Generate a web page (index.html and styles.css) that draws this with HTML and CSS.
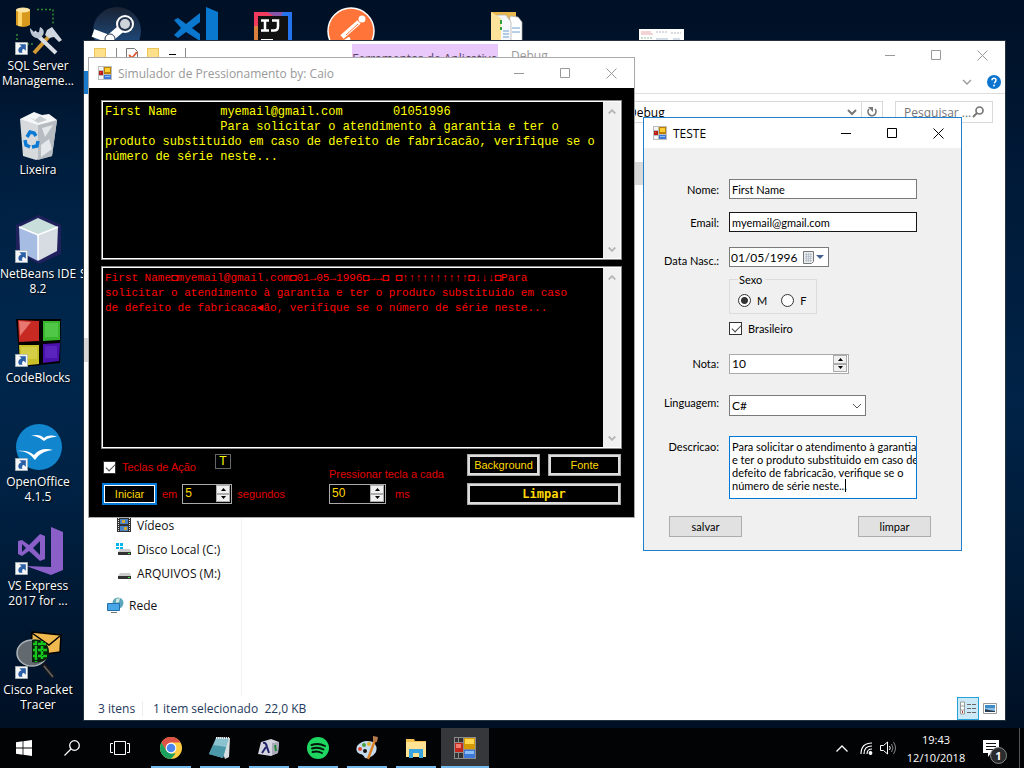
FILE: index.html
```html
<!DOCTYPE html>
<html lang="pt-BR">
<head>
<meta charset="utf-8">
<title>Simulador de Pressionamento</title>
<link rel="stylesheet" href="styles.css">
</head>
<body>
<svg class="defs" aria-hidden="true">
  <symbol id="form-icon" viewBox="0 0 14 14">
    <path fill="#bdbdbd" d="M0 0h14v14H0z"/><path fill="#f5f5f5" d="M1 1h4v3H1zM1 10h4v3H1z"/>
    <path fill="#b81d13" d="M1 5h4v4H1z"/><path fill="#e8594c" d="M2 6h1v1H2z"/>
    <path fill="#b98300" d="M6 1h7v7H6z"/><path fill="#ffce35" d="M7 2h5v4H7z"/>
    <path fill="#3d78d8" d="M6 9h7v4H6z"/><path fill="#8dbdf7" d="M7 10h5v1H7z"/>
  </symbol>
  <symbol id="form-icon-dark" viewBox="0 0 22 22">
    <path fill="#8c8c8c" d="M0 0h22v22H0z"/><path fill="#333" d="M1 1h3v4H1zM5 1h4v4H5zM1 16h3v5H1zM5 16h4v5H5z"/>
    <path fill="#c3261c" d="M1 6h8v9H1z"/><path fill="#ee7b70" d="M2 7h5v4H2z"/>
    <path fill="#d49a06" d="M10 1h11v11H10z"/><path fill="#ffd84d" d="M11 2h9v5h-9z"/>
    <path fill="#3d78d8" d="M10 13h11v8H10z"/><path fill="#8dbdf7" d="M11 14h9v3h-9z"/>
  </symbol>
  <symbol id="win-min" viewBox="0 0 11 11"><path d="M0 5.500h10" fill="none" stroke="currentColor"/></symbol>
  <symbol id="win-max" viewBox="0 0 11 11"><path d="M.5.5h9v9h-9z" fill="none" stroke="currentColor"/></symbol>
  <symbol id="win-close" viewBox="0 0 11 11"><path d="M.5.5l10 10M10.500.5l-10 10" fill="none" stroke="currentColor"/></symbol>
  <symbol id="shortcut" viewBox="0 0 12 12">
    <path fill="#f6f6f6" stroke="#9aa" stroke-width=".6" d="M.3.3h11.400v11.400H.3z"/>
    <path fill="#2b5fa6" d="M4 2h6v6L8 6.200C6.500 7 6 8.500 7 10H4C2 7.500 3.500 5 6 4z"/>
  </symbol>
  <symbol id="up" viewBox="0 0 8 5"><path d="M.7 4.500L4 1.200l3.300 3.300" fill="none" stroke="#b5b5b5" stroke-width="1.800"/></symbol>
  <symbol id="down" viewBox="0 0 8 5"><path d="M.7.5L4 3.800 7.300.5" fill="none" stroke="#b5b5b5" stroke-width="1.800"/></symbol>
  <symbol id="spin-up" viewBox="0 0 5 3"><path d="M0 3L2.500 0 5 3z"/></symbol>
  <symbol id="spin-down" viewBox="0 0 5 3"><path d="M0 0h5L2.500 3z"/></symbol>
  <symbol id="folder" viewBox="0 0 14 14"><path fill="#e9c657" d="M0 0h12v9h1v5H0z"/><path fill="#ffe08a" d="M1 1h10v12H1z"/></symbol>
</svg>

<main class="desktop">
  <div class="icons">
    <div class="shortcut c1 r1">
      <svg width="52" height="52" viewBox="0 0 52 52">
        <path fill="#d79a1d" d="M4 4q7-4 14 0v15q-7 4-14 0z"/><path fill="#ffd56a" d="M6 6h4v14H6z"/><ellipse cx="11" cy="4" rx="7" ry="2.500" fill="#fbe6a6"/>
        <path d="M25 3.500h16v14M5 28v10h18" fill="none" stroke="#2b8a34" stroke-width="1.500" stroke-dasharray="2 2"/>
        <path d="M22 47l18-20" stroke="#d39a35" stroke-width="4"/><path d="M22 26l22 21" stroke="#d9dee6" stroke-width="4"/>
        <path d="M18 22l5 5 4-1 1-5c5 2 5 8 0 11-6 1-10-3-10-10z" fill="#bcc6d3"/><path d="M35 24l5-3 10 13-3 2-5-5-5 1-4-3z" fill="#cfd6df"/>
        <use href="#shortcut" x="3" y="36" width="13" height="13"/>
      </svg>
      <span>SQL Server<br>Manageme...</span>
    </div>
    <div class="shortcut c1 r2">
      <svg width="52" height="52" viewBox="0 0 52 52">
        <path fill="#d6dadd" d="M8 9l37 1-5 36-16 4-13-4z"/><path fill="#b6bcc1" d="M26 15l19-5-5 36-14 4z"/><path fill="#f5f6f7" d="M8 9l8-4 6-3 8 3 7-1 8 6-19 5z"/>
        <path fill="#c7cccf" d="M17 7l6 3 5-4 7 4-9 3z"/><path fill="#e5e8ea" d="M30 18l11-3-8 12zM29 35l8-6 3 10-11 8z"/>
        <path d="M15 27l3-5 4 1 2 3M13 30l1 5 4 2M20 37l5-1 1-5" fill="none" stroke="#0b7ad5" stroke-width="3.500"/>
      </svg>
      <span>Lixeira</span>
    </div>
    <div class="shortcut c1 r3">
      <svg width="52" height="52" viewBox="0 0 52 52">
        <path fill="#20205c" d="M4 11L27 1l22 10v29L27 50 4 38z"/>
        <path fill="#c8dedb" d="M7 13l19-9 20 9-20 8z"/><path fill="#a6bce3" d="M7 13l19 8v26L8 38z"/><path fill="#d6dce2" d="M26 21l20-8-1 24-19 10z"/><path d="M7 13l19 8 20-8M26 21v25" fill="none" stroke="#fff" stroke-width="1.500"/>
        <use href="#shortcut" x="3" y="36" width="13" height="13"/>
      </svg>
      <span>NetBeans IDE<br>8.2</span>
    </div>
    <div class="shortcut c2 r3 cut"><span>S</span></div>
    <div class="shortcut c1 r4">
      <svg width="52" height="52" viewBox="0 0 52 52">
        <path d="M4 1h45l-1 44-40 4z"/>
        <path fill="#c62a22" d="M6 2l21 1v20L7 24z"/><path fill="#e77770" d="M7 3l12 1-11 14z"/><path fill="#38b62e" d="M31 3h17v19l-17 1z"/><path fill="#6ad860" d="M33 5h13v14H33z" opacity=".5"/>
        <path fill="#c9bf28" d="M7 27h20v19L8 48z"/><path fill="#e4dc66" d="M9 29h16v12H9z" opacity=".5"/><path fill="#4a12ad" d="M31 26l17-1-1 18-16 2z"/><path fill="#6a35cc" d="M33 28h12v12H33z" opacity=".5"/>
        <use href="#shortcut" x="3" y="36" width="13" height="13"/>
      </svg>
      <span>CodeBlocks</span>
    </div>
    <div class="shortcut c1 r5">
      <svg width="52" height="52" viewBox="0 0 52 52">
        <circle cx="27" cy="25" r="23" fill="#1186cf"/>
        <path fill="#fff" d="M19 14c6-2 10-1 13 2 4-3 8-3 13-1-6 0-9 1-13 4-4-3-7-5-13-5zM5 29c7-1 13 0 17 4 5-6 11-7 19-5-9 1-14 4-18 10-5-6-9-9-18-9z"/>
        <use href="#shortcut" x="3" y="36" width="13" height="13"/>
      </svg>
      <span>OpenOffice<br>4.1.5</span>
    </div>
    <div class="shortcut c1 r6">
      <svg width="52" height="52" viewBox="0 0 52 52">
        <path fill="#8a5fc8" d="M39 1l12 5v38l-12 5-25-9 25 1z"/><path fill="#8a5fc8" fill-rule="evenodd" d="M6 15l4-1 7 5 11-11 5 2v23l-5 2-11-10-7 5-4-2zM10 18v8l4-4zM28 15l-7 7 7 7z"/>
        <use href="#shortcut" x="3" y="36" width="13" height="13"/>
      </svg>
      <span>VS Express<br>2017 for ...</span>
    </div>
    <div class="shortcut c1 r7">
      <svg width="52" height="52" viewBox="0 0 52 52">
        <path fill="#efb94f" stroke="#000" stroke-width="1.500" d="M20 2l29 3-1 17-29 4z"/><path d="M20 3l17 12L48 6" fill="none" stroke="#000" stroke-width="1.500"/>
        <path d="M31 34l10 13" stroke="#15171a" stroke-width="5"/><path d="M32 36l9 11" stroke="#666" stroke-width="1.500"/>
        <ellipse cx="20" cy="23" rx="15" ry="13" fill="#626a70" stroke="#adb3b7" stroke-width="1.500"/>
        <path fill="#07210a" d="M20 10c10-2 17 4 17 12s-8 12-17 10z"/><path d="M21 14h13M21 20h15M21 26h14M24 11v21M30 11v18" stroke="#15c51d" stroke-width="2.500" stroke-dasharray="4 1"/>
        <use href="#shortcut" x="3" y="36" width="13" height="13"/>
      </svg>
      <span>Cisco Packet<br>Tracer</span>
    </div>
    <div class="shortcut c2 r1">
      <svg width="52" height="52" viewBox="0 0 52 52">
        <defs><linearGradient id="st" x2="0" y2="1"><stop stop-color="#1a2233"/><stop offset="1" stop-color="#1f5793"/></linearGradient></defs>
        <circle cx="27" cy="25" r="24" fill="url(#st)"/><path d="M3 27l16 6 14-12" fill="none" stroke="#fff" stroke-width="8"/><circle cx="35" cy="18" r="9" fill="#fff"/><circle cx="35" cy="18" r="7" fill="#26354f"/><circle cx="35" cy="18" r="5" fill="#cfd4db"/><circle cx="20" cy="33" r="5" fill="#fff" stroke="#26354f"/>
      </svg>
    </div>
    <div class="shortcut c3 r1">
      <svg width="52" height="52" viewBox="0 0 52 52">
        <path fill="#0a78cf" fill-rule="evenodd" d="M6 14l4-2 8 6L32 7v28L18 26l-8 6-4-3 7-7zM32 16l-8 6 8 6z"/><path fill="#0a78cf" d="M38 1l12 5v40l-12 4z"/>
      </svg>
    </div>
    <div class="shortcut c4 r1">
      <svg width="52" height="52" viewBox="0 0 52 52">
        <path fill="#f2395e" d="M8 6h38v38H8z"/><path fill="#2574ef" d="M46 6v38H27l4-30-2-8z"/><path fill="#d8803c" d="M8 20h8v24H8z"/><path fill="#8655a8" d="M21 6h16l-3 8z"/><path fill="#111" d="M12 10h30v30H12z"/>
        <path d="M15 14.500h8M19 14v10M15 24.500h8M26 14.500h6v6q0 4-4 4h-3" fill="none" stroke="#fff" stroke-width="2.500"/><path fill="#fff" d="M15 33h12v2H15z"/>
      </svg>
    </div>
    <div class="shortcut c5 r1">
      <svg width="52" height="52" viewBox="0 0 52 52">
        <circle cx="27" cy="25" r="23" fill="#ff7438" stroke="#fff" stroke-width="1.500"/><path d="M18 31l17-15" stroke="#fff" stroke-width="5"/><path d="M22 29l12-11" stroke="#ff7438"/><circle cx="38" cy="13" r="3.500" fill="#fff"/><path d="M18 37l8-5" stroke="#fff" stroke-width="3"/>
      </svg>
    </div>
    <div class="shortcut c7 r1">
      <svg width="52" height="52" viewBox="0 0 52 52">
        <path fill="#e8b84c" d="M11 6h25v40H11z"/><path fill="#fff" stroke="#aaa" stroke-width=".7" d="M30 10l8 1 4 5v30H28z"/><path fill="#f7f8fa" stroke="#aaa" stroke-width=".7" d="M17 9h9l5 7v30H17z"/><path fill="#ffe39a" d="M11 6l10 6v34H11z"/><path d="M21 14v4M21 21v3" stroke="#2ba33a" stroke-width="2"/><path d="M23 25h6M23 28h6M32 22h8M32 26h8M23 31h6" stroke="#6ba0d4" stroke-width="1"/>
      </svg>
    </div>
    <div class="shortcut c9 r1">
      <svg width="52" height="52" viewBox="0 0 52 52">
        <path fill="#fff" d="M3 23h45v24H3z"/><path d="M5 26h10M5 28h12" stroke="#e7a9ae"/><path d="M20 26h11M35 27h10" stroke="#b5b5c0" stroke-dasharray="2 1"/><path d="M5 32h12" stroke="#95bb9d" stroke-dasharray="2 1"/><path d="M20 33h12M37 33h7" stroke="#a8bccf"/>
      </svg>
    </div>
  </div>

  <section class="window explorer" aria-label="Debug">
    <header class="ex-title">
      <div class="quick">
        <svg width="14" height="14"><use href="#folder"/></svg><i></i>
        <svg width="14" height="14" viewBox="0 0 14 14"><path fill="#fff" stroke="#777" d="M1.500.5h8l3 3v10h-11z"/><path d="M4 7l3 3 5-6" fill="none" stroke="#e0532d" stroke-width="1.800"/></svg>
        <svg width="14" height="14"><use href="#folder"/></svg>
        <svg width="8" height="12" viewBox="0 0 8 12"><path d="M0 6.500h7" stroke="#000"/><path d="M1 9h6l-3 3z"/></svg><i></i>
      </div>
      <span class="tool-tab">Ferramentas de Aplicativo</span>
      <span class="ex-name">Debug</span>
      <div class="controls">
        <button type="button" aria-label="Minimizar"><svg width="11" height="11"><use href="#win-min"/></svg></button>
        <button type="button" aria-label="Maximizar"><svg width="11" height="11"><use href="#win-max"/></svg></button>
        <button type="button" aria-label="Fechar"><svg width="11" height="11"><use href="#win-close"/></svg></button>
      </div>
    </header>
    <div class="ribbon">
      <span class="file-tab"></span>
      <svg width="10" height="6" viewBox="0 0 10 6"><path d="M1 1l4 4 4-4" fill="none" stroke="#999" stroke-width="1.300"/></svg>
      <svg width="14" height="14" viewBox="0 0 14 14"><circle cx="7" cy="7" r="7" fill="#0b74cf"/><path d="M5 5.300q0-2 2-2t2 1.800-2 3" fill="none" stroke="#fff" stroke-width="1.500"/><circle cx="7" cy="10.500" r=".9" fill="#fff"/></svg>
    </div>
    <div class="address">
      <div class="path"><span>Debug</span>
        <svg width="10" height="7" viewBox="0 0 10 7"><path d="M1 1l4 4 4-4" fill="none" stroke="#777" stroke-width="2"/></svg>
        <button type="button" aria-label="Atualizar"><svg width="12" height="12" viewBox="0 0 12 12"><path d="M3 3a4 4 0 1 0 6 0" fill="none" stroke="#777" stroke-width="1.700"/><path d="M2 1h5v5z" fill="#777"/></svg></button>
      </div>
      <div class="search">Pesquisar ...<svg width="12" height="12" viewBox="0 0 12 12"><circle cx="7.500" cy="4.500" r="3.500" fill="none" stroke="#777" stroke-width="1.700"/><path d="M5 7L1 11" stroke="#777" stroke-width="2"/></svg></div>
    </div>
    <div class="ex-body">
      <nav>
        <span class="selected"></span>
        <a href="#videos" class="first"><svg width="16" height="16" viewBox="0 0 16 16"><path fill="#333" d="M1 1h14v14H1z"/><path fill="#4b83c7" d="M4 2h8v5H4zM4 9h8v5H4z"/><path fill="#d6a531" d="M6 3h3v3H6zM8 10h3v3H8z"/><path d="M2.500 1v14M13.500 1v14" stroke="#ddd" stroke-dasharray="1 1"/></svg>Vídeos</a>
        <a href="#c"><svg width="16" height="16" viewBox="0 0 16 16"><path fill="#00b4f0" d="M0 2h3v3H0zM4 2h3v3H4zM0 6h3v2H0zM4 6h3v2H4z"/><path fill="#ccc" d="M4 8h10l1 3H2z"/><path fill="#333" d="M2 11h13v3H2z"/><path fill="#4e4" d="M12 12h2v1h-2z"/></svg>Disco Local (C:)</a>
        <a href="#m"><svg width="16" height="16" viewBox="0 0 16 16"><path fill="#ccc" d="M4 8h10l1 3H2z"/><path fill="#333" d="M2 11h13v3H2z"/><path fill="#4e4" d="M12 12h2v1h-2z"/></svg>ARQUIVOS (M:)</a>
        <a href="#rede" class="root"><svg width="17" height="16" viewBox="0 0 17 16"><circle cx="11" cy="6" r="5.500" fill="#5ba6bd"/><path fill="#cfe7dd" d="M9 2l4-1-1 4-3 1z"/><path fill="#47a6e8" stroke="#2570a6" d="M.5 6.500h12v7H.5z"/><path d="M4 15.500h6" stroke="#777"/></svg>Rede</a>
      </nav>
      <div class="files"><span class="file-row"></span></div>
    </div>
    <footer class="status">
      <span>3 itens</span><span>1 item selecionado&nbsp; 22,0 KB</span>
      <button type="button" class="view on" aria-label="Detalhes"><svg width="17" height="14" viewBox="0 0 17 14"><path fill="#fff" d="M.5 1h4v12h-4z"/><path d="M.5 1h4v12h-4zM.5 5h4M.5 9h4" fill="none" stroke="#999"/><path d="M7 3.500h4M12 3.500h4M7 7.500h4M12 7.500h4M7 11.500h4M12 11.500h4" stroke="#666"/><path fill="#c22" d="M2 10h1v2H2z"/></svg></button>
      <button type="button" class="view" aria-label="Miniaturas"><svg width="14" height="11" viewBox="0 0 14 11"><path fill="#fff" stroke="#999" d="M.5.5h13v10H.5z"/><path fill="#3d8bc9" d="M2 2h10v3H2z"/><path fill="#8fc0e4" d="M2 5h10v4H2z"/><path fill="#263d55" d="M2 6l4 1 6 1v1H2z"/></svg></button>
    </footer>
  </section>

  <section class="window sim" aria-label="Simulador de Pressionamento by: Caio">
    <header class="titlebar">
      <svg width="14" height="14"><use href="#form-icon"/></svg><h1>Simulador de Pressionamento by: Caio</h1>
      <div class="controls">
        <button type="button" aria-label="Minimizar"><svg width="11" height="11"><use href="#win-min"/></svg></button>
        <button type="button" aria-label="Maximizar"><svg width="11" height="11"><use href="#win-max"/></svg></button>
        <button type="button" aria-label="Fechar"><svg width="11" height="11"><use href="#win-close"/></svg></button>
      </div>
    </header>
    <div class="sim-body">
      <div class="console input">
        <textarea aria-label="Texto" spellcheck="false">First Name      myemail@gmail.com       01051996
                Para solicitar o atendimento à garantia e ter o
produto substituido em caso de defeito de fabricacão, verifique se o
número de série neste...</textarea>
        <div class="scroll"><svg width="8" height="5"><use href="#up"/></svg><svg width="8" height="5"><use href="#down"/></svg></div>
      </div>
      <div class="console keys">
        <textarea aria-label="Teclas" spellcheck="false">First Name◘myemail@gmail.com◘01→05→1996◘→→◘ ◘↑↑↑↑↑↑↑↑↑↑◘↓↓↓◘Para
solicitar o atendimento à garantia e ter o produto substituido em caso
de defeito de fabricaca◄ão, verifique se o número de série neste...</textarea>
        <div class="scroll"><svg width="8" height="5"><use href="#up"/></svg><svg width="8" height="5"><use href="#down"/></svg></div>
      </div>
      <div class="panel">
        <div class="group start">
          <div class="line top">
            <label class="tick"><input type="checkbox" checked>Teclas de Ação</label>
            <button type="button" class="t-button">T</button>
          </div>
          <div class="line">
            <button type="button" class="black primary">Iniciar</button>
            <label for="delay">em</label>
            <div class="spin"><input id="delay" type="number" value="5"><div class="arrows"><button type="button" aria-label="Mais"><svg width="5" height="3"><use href="#spin-up"/></svg></button><button type="button" aria-label="Menos"><svg width="5" height="3"><use href="#spin-down"/></svg></button></div></div>
            <span>segundos</span>
          </div>
        </div>
        <div class="group press">
          <label for="ms">Pressionar tecla a cada</label>
          <div class="line">
            <div class="spin"><input id="ms" type="number" value="50"><div class="arrows"><button type="button" aria-label="Mais"><svg width="5" height="3"><use href="#spin-up"/></svg></button><button type="button" aria-label="Menos"><svg width="5" height="3"><use href="#spin-down"/></svg></button></div></div>
            <span>ms</span>
          </div>
        </div>
        <div class="group actions">
          <button type="button" class="black">Background</button>
          <button type="button" class="black">Fonte</button>
          <button type="button" class="black clear">Limpar</button>
        </div>
      </div>
    </div>
  </section>

  <section class="window teste" aria-label="TESTE">
    <header class="titlebar">
      <svg width="14" height="14"><use href="#form-icon"/></svg><h1>TESTE</h1>
      <div class="controls">
        <button type="button" aria-label="Minimizar"><svg width="11" height="11"><use href="#win-min"/></svg></button>
        <button type="button" aria-label="Maximizar"><svg width="11" height="11"><use href="#win-max"/></svg></button>
        <button type="button" aria-label="Fechar"><svg width="11" height="11"><use href="#win-close"/></svg></button>
      </div>
    </header>
    <form class="form">
      <div class="fields">
        <label for="nome">Nome:</label><input id="nome" class="box" type="text" value="First Name">
        <label for="email">Email:</label><input id="email" class="box hot" type="text" value="myemail@gmail.com">
        <label for="nasc" class="low">Data Nasc.:</label>
        <div class="date box"><input id="nasc" type="text" value="01/05/1996"><button type="button" aria-label="Calendário"><svg width="21" height="13" viewBox="0 0 21 13"><path fill="#e8ebee" stroke="#777" d="M.5.5h10v10l-2 2h-8z"/><path d="M2 3.500h7M2 5.500h7M2 7.500h7M2 9.500h7M3.500 2v9M5.500 2v9M7.500 2v9" stroke="#a9b4c0" stroke-width=".6"/><path fill="#44608d" d="M13 4h8l-4 4z"/></svg></button></div>
        <fieldset>
          <legend>Sexo</legend>
          <label><input type="radio" name="sexo" checked>M</label>
          <label><input type="radio" name="sexo">F</label>
        </fieldset>
        <label class="tick"><input type="checkbox" checked>Brasileiro</label>
        <label for="nota" class="nota">Nota:</label>
        <div class="spin light"><input id="nota" type="number" value="10"><div class="arrows"><button type="button" aria-label="Mais"><svg width="5" height="3"><use href="#spin-up"/></svg></button><button type="button" aria-label="Menos"><svg width="5" height="3"><use href="#spin-down"/></svg></button></div></div>
        <label for="ling" class="high">Linguagem:</label>
        <div class="drop"><select id="ling" class="box"><option>C#</option></select><svg width="10" height="6" viewBox="0 0 10 6"><path d="M1 1l4 4 4-4" fill="none" stroke="#555"/></svg></div>
        <label for="desc" class="top-label">Descricao:</label>
        <div class="memo">
          <textarea id="desc" class="box" spellcheck="false">Para solicitar o atendimento à garantia
e ter o produto substituido em caso de
defeito de fabricacão, verifique se o
número de série neste...</textarea>
          <span class="caret"></span>
        </div>
      </div>
      <div class="buttons"><button type="button">salvar</button><button type="button">limpar</button></div>
    </form>
  </section>
</main>

<footer class="taskbar">
  <button type="button" class="sys" aria-label="Iniciar"><svg width="16" height="16" viewBox="0 0 16 16" fill="#fff"><path d="M0 2.300L6.600 1.300v6.300H0zM7.400 1.200L16 0v7.600H7.400zM0 8.400h6.600v6.300L0 13.700zM7.400 8.400H16V16l-8.600-1.200z"/></svg></button>
  <button type="button" class="sys" aria-label="Pesquisar"><svg width="16" height="16" viewBox="0 0 16 16" fill="none" stroke="#fff" stroke-width="1.300"><circle cx="10.500" cy="5.500" r="4.800"/><path d="M7 9L.5 15.500"/></svg></button>
  <button type="button" class="sys view-btn" aria-label="Visão de tarefas"><svg width="20" height="14" viewBox="0 0 20 14" fill="none" stroke="#fff"><path d="M4.500.5h11v13h-11zM3 2.500H.5v9H3M17 2.500h2.500v9H17"/></svg></button>
  <button type="button" class="app" aria-label="Chrome"><svg width="24" height="24" viewBox="0 0 24 24"><circle cx="12" cy="12" r="11" fill="#ffcd41"/><path fill="#de5246" d="M2.500 6.500A11 11 0 0 1 21.600 6.600H12L7.300 14.700z"/><path fill="#1aa15f" d="M2.500 6.500L7.300 14.700 12 17.400h4.700L12 23A11 11 0 0 1 2.500 6.500z"/><circle cx="12" cy="12" r="5.400" fill="#fff"/><circle cx="12" cy="12" r="4.300" fill="#4b87ee"/></svg></button>
  <button type="button" class="app" aria-label="Bloco de notas"><svg width="24" height="24" viewBox="0 0 24 24"><path fill="#d7dde0" d="M9 1l13 1-1 19-4 2z"/><path fill="#8ac3cf" d="M8 2l13 0-6 20L1 18z"/><path fill="#4a98a9" d="M5 9l13 2-3 11L1 18z"/><path d="M8 2h13" stroke="#e8e8e8" stroke-width="2" stroke-dasharray="1 1"/></svg></button>
  <button type="button" class="app" aria-label="Lambda"><svg width="24" height="24" viewBox="0 0 24 24"><path fill="#d4d5df" d="M4 6l10-3 8 3-1 11-7 3-13-2z"/><path fill="#a9abb9" d="M15 7l7-1-1 11-6 2z"/><path d="M6 7q3-1 4 4l2 6M9 11l-4 6" fill="none" stroke="#21246a" stroke-width="2"/><path d="M18 9l1 6" stroke="#238a3a" stroke-width="2"/></svg></button>
  <button type="button" class="app" aria-label="Spotify"><svg width="24" height="24" viewBox="0 0 24 24"><circle cx="12" cy="12" r="11" fill="#1ed760"/><path d="M5.500 9q7-2.500 13.500 1M6 12.500q6-2 11.500 1M6.500 16q5-1.500 9.500 1" fill="none" stroke="#06130a" stroke-width="1.900" stroke-linecap="round"/></svg></button>
  <button type="button" class="app" aria-label="Paint"><svg width="24" height="24" viewBox="0 0 24 24"><path fill="#c5dcef" d="M2 10q6-7 16-4 5 4 3 10-5 7-11 6-2-4-5-4-5-2-3-8z"/><circle cx="5" cy="13" r="2" fill="#e04b36"/><circle cx="9" cy="9" r="2" fill="#49a144"/><circle cx="14" cy="8" r="2" fill="#e6b22e"/><circle cx="10" cy="15" r="2" fill="#111"/><path d="M20 4l-7 19" stroke="#d9822c" stroke-width="2.500"/><path fill="#b77a4c" d="M18 0l5 1-1 5-4-1z"/></svg></button>
  <button type="button" class="app" aria-label="Explorador de Arquivos"><svg width="24" height="24" viewBox="0 0 24 24"><path fill="#f2c14e" d="M2 3h8l1 2h11v3H2z"/><path fill="#ffe292" d="M2 6h20v15H2z"/><path fill="#38a5e0" d="M5 22v-9h14v9h-4v-5H9v5z"/></svg></button>
  <button type="button" class="app active" aria-label="Simulador"><svg width="22" height="22"><use href="#form-icon-dark"/></svg></button>
  <div class="tray">
    <svg width="12" height="7" viewBox="0 0 12 7"><path d="M.5 6.500L6 1l5.500 5.500" fill="none" stroke="#fff" stroke-width="1.300"/></svg>
    <svg class="wifi" width="13" height="13" viewBox="0 0 13 13" fill="none" stroke="#fff" stroke-width="1.200"><path d="M1 12Q1 1 12 1M4 12q0-8 8-8M7 12q0-5 5-5" /><circle cx="10.500" cy="11" r="1.300" fill="#fff"/></svg>
    <svg width="17" height="14" viewBox="0 0 17 14" fill="none" stroke="#fff"><path d="M.5 4.500h3L7.500 1v12l-4-3.500h-3zM9.500 5q1.500 2 0 4"/><path d="M11.500 3q3 4 0 8M13.500 1q4 6 0 12" stroke="#888"/></svg>
    <div class="clock"><time>19:43</time><time>12/10/2018</time></div>
    <button type="button" class="notes" aria-label="Notificações"><svg width="16" height="17" viewBox="0 0 16 17"><path fill="#fff" d="M0 0h16v13H8l-3 4v-4H0z"/><path d="M3 3.500h10M3 6.500h10M3 9.500h7" stroke="#111"/></svg><b>1</b></button>
    <span class="peek"></span>
  </div>
</footer>
</body>
</html>
```

FILE: styles.css
```css
* { box-sizing: border-box; }

html, body { height: 100%; margin: 0; }

body {
  display: flex;
  flex-direction: column;
  overflow: hidden;
  background: #000;
  color: #000;
  font: 12px/15px "Open Sans", sans-serif;
}

button, input, select, textarea {
  margin: 0;
  padding: 0;
  border: 0;
  border-radius: 0;
  outline: 0;
  background: transparent;
  color: inherit;
  font: inherit;
}

svg { display: block; flex: none; }
.defs { position: absolute; width: 0; height: 0; }

/* Desktop */
.desktop {
  position: relative;
  flex: 1;
  min-height: 0;
  background:
    radial-gradient(ellipse at 5% 45%, #00264b 0, transparent 45%),
    linear-gradient(#001025, #001a38 25%, #002347 55%, #001a36 80%, #001024);
}

.icons {
  display: grid;
  grid-template-columns: repeat(9, 78px);
  grid-template-rows: repeat(7, 104px);
  margin-left: -1px;
  padding-top: 6px;
}

.shortcut {
  display: flex;
  flex-direction: column;
  align-items: center;
  color: #fff;
  text-align: center;
  text-shadow: 1px 1px 2px #000;
  white-space: nowrap;
}

.cut { padding: 52px 0 0 3px; align-items: flex-start; }
.c1 { grid-column: 1; } .c2 { grid-column: 2; } .c3 { grid-column: 3; }
.c4 { grid-column: 4; } .c5 { grid-column: 5; } .c7 { grid-column: 7; } .c9 { grid-column: 9; }
.r1 { grid-row: 1; } .r2 { grid-row: 2; } .r3 { grid-row: 3; } .r4 { grid-row: 4; }
.r5 { grid-row: 5; } .r6 { grid-row: 6; } .r7 { grid-row: 7; }

/* Windows */
.window {
  position: absolute;
  display: flex;
  flex-direction: column;
  border: 1px solid;
  background: #fff;
}

.explorer { left: 83px; top: 40px; right: 18px; bottom: 7px; border-color: #26313e; }
.sim { left: 88px; top: 57px; width: 547px; border-color: #aaa; }
.teste { left: 643px; top: 117px; width: 319px; border-color: #1e7fcf; }

.titlebar {
  display: flex;
  align-items: center;
  height: 30px;
  padding-left: 9px;
  background: #fff;
}

.titlebar h1 {
  flex: 1;
  margin: 0 0 0 6px;
  font-size: 12px;
  font-weight: 400;
  white-space: nowrap;
}

.sim .titlebar { color: #999; }
.controls { display: flex; }
.controls button { display: grid; place-items: center; width: 46px; height: 29px; }

/* Explorer */
.ex-title { display: flex; height: 30px; color: #999; }
.quick { display: flex; width: 268px; padding: 7px 0 0 10px; gap: 8px; }
.quick i { width: 1px; height: 14px; background: #888; }
.tool-tab { width: 146px; margin-top: 3px; padding-top: 7px; background: #e9c8fb; color: #554060; text-align: center; white-space: nowrap; }
.ex-name { flex: 1; padding: 7px 0 0 13px; }
.ribbon { display: flex; align-items: center; gap: 15px; height: 23px; padding-right: 4px; border-bottom: 1px solid #ddd; }
.file-tab { width: 60px; height: 23px; margin-right: auto; background: #1979ca; }
.address { display: flex; gap: 12px; padding: 7px 12px 6px 120px; }
.path { display: flex; flex: 1; align-items: center; height: 22px; border: 1px solid #d9d9d9; }
.path span { flex: 1; padding-left: 423px; }
.path button { display: grid; place-items: center; width: 21px; height: 20px; margin-left: 4px; border-left: 1px solid #d9d9d9; }
.search { display: flex; align-items: center; justify-content: space-between; width: 98px; height: 22px; padding: 0 8px; border: 1px solid #d9d9d9; color: #767676; white-space: nowrap; }
.ex-body { display: flex; flex: 1; min-height: 0; }
nav { display: flex; flex-direction: column; width: 158px; padding: 209px 0 79px; border-right: 1px solid #f3f3f3; }
nav .selected { height: 24px; background: #d9d9d9; }
nav a { display: flex; align-items: center; gap: 5px; height: 24px; padding-left: 32px; color: #111; text-decoration: none; white-space: nowrap; }
nav .first { margin-top: auto; }
nav .root { margin-top: 8px; padding-left: 23px; }
.files { flex: 1; padding: 33px 320px 0 0; }
.file-row { display: block; height: 23px; background: #d9d9d9; }
.status { display: flex; align-items: center; height: 24px; padding: 0 4px 0 14px; color: #1e395b; }
.status span + span { flex: 1; margin-left: 7px; padding-left: 10px; border-left: 1px solid #eee; }
.view { display: grid; place-items: center; width: 22px; height: 23px; }
.view.on { border: 1px solid #26a0da; background: #cbe8f6; }

/* Simulator */
.sim-body { padding: 12px; background: #000; font: 11px/13px "Liberation Sans", sans-serif; }
.console { display: flex; border: 1px solid #888; outline: 1px solid #fff; outline-offset: -2px; padding: 1px; }
.console textarea {
  flex: 1;
  min-width: 0;
  padding: 3px 0 0 2px;
  overflow: hidden;
  resize: none;
  font: 12px/15px "Liberation Mono", monospace;
  white-space: pre;
}
.console.keys textarea { font-size: 11px; }
.input { height: 160px; color: #ff0; }
.keys { height: 183px; margin-top: 6px; color: #f00; }
.scroll { display: flex; flex-direction: column; justify-content: space-between; align-items: center; width: 17px; padding: 7px 0 6px; background: #f0f0f0; }

.panel { display: flex; padding: 5px 1px 0; color: #e00000; }
.group { white-space: nowrap; }
.start { width: 227px; }
.line { display: flex; align-items: center; gap: 5px; }
.line.top { justify-content: space-between; align-items: flex-start; width: 129px; height: 29px; }
.tick { display: flex; align-items: center; gap: 6px; }
.tick input {
  width: 13px;
  height: 13px;
  appearance: none;
  border: 1px solid #333;
  background: #fff;
}
.tick input:checked::after {
  content: "";
  display: block;
  width: 4px;
  height: 8px;
  margin-left: 4px;
  border: solid #444;
  border-width: 0 1px 1px 0;
  transform: rotate(45deg);
}
.start .tick { padding: 7px 0 0 1px; }
.t-button { width: 16px; height: 15px; border: 1px solid #666; color: #ff0; font-size: 12px; }
.black { height: 22px; border: 1px solid #aaa; outline: 2px solid #ddd; outline-offset: -3px; color: #ffd800; }
.primary { width: 55px; border: 2px solid #0078d7; outline: 1px solid #fff; outline-offset: -3px; }
.spin { display: flex; width: 50px; height: 20px; padding: 0 1px 1px; border: 1px solid #aaa; color: #ffd800; }
.spin input { flex: 1; min-width: 0; padding: 0 0 1px 1px; font-size: 12px; appearance: textfield; }
.spin input::-webkit-inner-spin-button { appearance: none; }
.arrows { display: grid; grid-template-rows: 1fr 1fr; width: 14px; }
.arrows button { display: grid; place-items: center; min-height: 0; border: 1px solid #acacac; background: #f0f0f0; }
.press { display: flex; flex-direction: column; gap: 3px; padding-top: 14px; }
.press .spin { width: 57px; }
.press .line { gap: 9px; }
.actions { display: grid; grid-template-columns: 1fr 1fr; gap: 7px 8px; width: 154px; margin-left: auto; }
.clear { grid-column: 1 / 3; font: bold 12px/15px "DejaVu Sans Mono", monospace; }

/* Form */
.form { padding: 31px 30px 13px 10px; background: #f0f0f0; font: 11px/13px Lato, "Liberation Sans", sans-serif; }
.fields { display: grid; grid-template-columns: 65px 1fr; column-gap: 10px; align-items: center; }
.fields > label { text-align: right; white-space: nowrap; }
.box { width: 100%; max-width: 188px; height: 20px; padding: 0 2px; border: 1px solid #7a7a7a; background: #fff; }
.hot { border-color: #171717; }
#email, label[for="email"] { margin-top: 13px; }
.date { display: flex; align-items: center; width: 100px; margin-top: 15px; padding: 0 4px 0 1px; }
.date input { flex: 1; min-width: 0; font-size: 12px; }
.low { margin-top: 21px; }
fieldset { grid-column: 2; display: flex; align-items: center; gap: 14px; width: 88px; height: 41px; margin: 6px 0 0; padding: 2px 8px 0; border: 1px solid #dcdcdc; }
legend { padding: 0 3px 0 1px; }
fieldset label { display: flex; align-items: center; gap: 6px; }
fieldset input { width: 13px; height: 13px; appearance: none; border: 1px solid #333; border-radius: 50%; background: #fff; }
fieldset input:checked { background: radial-gradient(circle, #333 0 3px, #fff 4px); }
.fields > .tick { grid-column: 2; margin-top: 8px; }
.light { width: 120px; margin-top: 19px; background: #fff; color: #000; }
.nota { margin-top: 18px; }
.drop { display: flex; align-items: center; width: 137px; margin-top: 21px; }
.drop select { height: 21px; appearance: none; font-size: 12px; }
.drop svg { margin-left: -14px; pointer-events: none; }
.high { margin-top: 14px; }
.memo { position: relative; margin-top: 20px; }
.memo textarea { display: block; height: 63px; padding-top: 3px; overflow: hidden; resize: none; border-color: #0078d7; white-space: pre; }
.caret { position: absolute; left: 116px; top: 43px; width: 1px; height: 13px; background: #000; }
.top-label { align-self: start; margin-top: 24px; }
.buttons { display: flex; justify-content: space-between; margin-top: 17px; padding-left: 15px; }
.buttons button { width: 73px; height: 21px; border: 1px solid #adadad; background: #e1e1e1; }

/* Taskbar */
.taskbar { display: flex; height: 40px; background: #020305; color: #fff; }
.taskbar button { display: grid; place-items: center; width: 48px; height: 40px; }
.view-btn { margin-right: 3px; }
.taskbar .app { position: relative; margin-right: 1px; }
.app::after { content: ""; position: absolute; right: 4px; bottom: 0; left: 4px; height: 2px; background: #76b9ed; }
.app.active { background: #36373a; }
.app.active::after { right: 0; left: 0; }
.tray { display: flex; align-items: center; gap: 12px; margin-left: auto; }
.tray .wifi { margin-right: -5px; }
.clock { display: flex; flex-direction: column; align-items: center; gap: 3px; width: 58px; margin-left: -2px; font-size: 11px; white-space: nowrap; }
.taskbar .notes { position: relative; width: 24px; justify-items: start; margin-left: 6px; }
.notes b { position: absolute; right: 0; bottom: 4px; width: 17px; height: 17px; border: 1px solid #888; border-radius: 50%; background: #2a2b2d; font-size: 11px; line-height: 15px; text-align: center; }
.peek { width: 5px; height: 40px; border-left: 1px solid #555; }
```
